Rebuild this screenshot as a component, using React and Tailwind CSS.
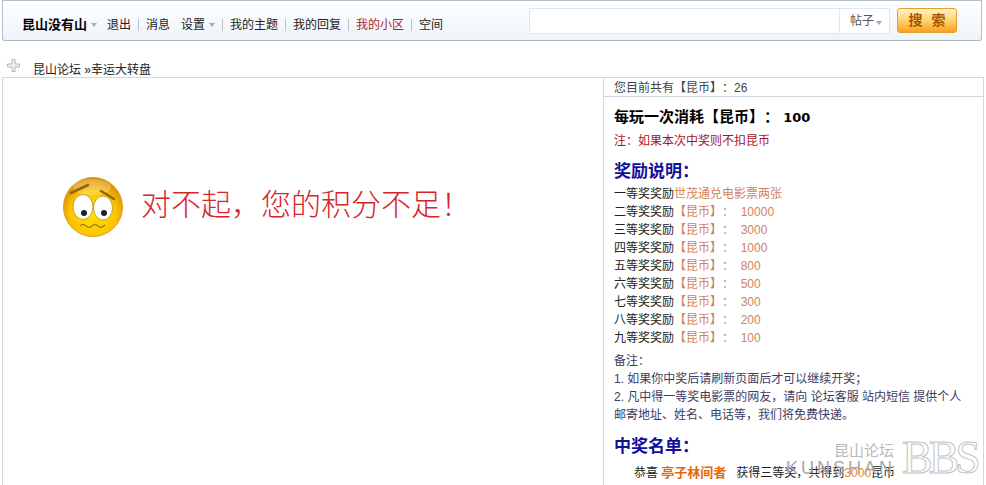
import React from 'react';

const cjk = "font-['Liberation_Sans','Noto_Sans_CJK_SC',sans-serif] [text-spacing-trim:space-all]";

const prizes = [
  ['二等奖奖励', '10000'],
  ['三等奖奖励', '3000'],
  ['四等奖奖励', '1000'],
  ['五等奖奖励', '800'],
  ['六等奖奖励', '500'],
  ['七等奖奖励', '300'],
  ['八等奖奖励', '200'],
  ['九等奖奖励', '100'],
];

function Caret() {
  return <span className="inline-block ml-[4px] w-0 h-0 border-x-[3px] border-x-transparent border-t-[4px] border-t-[#aaaaaa]" />;
}

function Sep() {
  return <span className="w-px h-[12px] bg-[#b9c3cc] mx-[7px]" />;
}

function Smiley() {
  return (
    <svg width="62" height="62" viewBox="0 0 62 62">
      <defs>
        <radialGradient id="face" cx="50%" cy="62%" r="60%">
          <stop offset="0%" stopColor="#ffe100" />
          <stop offset="65%" stopColor="#fcc400" />
          <stop offset="100%" stopColor="#d88a00" />
        </radialGradient>
      </defs>
      <circle cx="31" cy="31" r="29.500" fill="url(#face)" stroke="#dca11a" />
      <ellipse cx="30" cy="11" rx="19" ry="8" fill="#fff" opacity="0.25" />
      <path d="M9 17 L26 9" stroke="#8a6a10" strokeWidth="2.500" strokeLinecap="round" fill="none" />
      <path d="M39 15 L52 23" stroke="#8a6a10" strokeWidth="2.500" strokeLinecap="round" fill="none" />
      <ellipse cx="21" cy="31" rx="10" ry="12.500" fill="#fff" stroke="#c9a21f" />
      <ellipse cx="41" cy="32" rx="9.500" ry="12" fill="#fff" stroke="#c9a21f" />
      <circle cx="22" cy="37" r="3" fill="#222" />
      <circle cx="42" cy="37" r="3" fill="#222" />
      <path d="M18 50 q3 -3 6 0 t6 0 t6 0 t7 -1" stroke="#a9810f" strokeWidth="1.500" fill="none" />
    </svg>
  );
}

export default function App() {
  return (
    <div className={`${cjk} relative w-[986px] h-[485px] overflow-hidden bg-white text-[12px] text-[#222]`}>
      {/* top bar */}
      <div className="mx-[2px] w-[980px] h-[41px] flex items-center border border-t-[#b4c0c8] border-x-[#b4c0c8] border-b-[#aab6be] rounded-b-[3px] bg-gradient-to-b from-white to-[#eef4fa]">
        <div className="flex items-center pl-[19px] pt-[9px]">
          <b className="text-[13px] text-black">昆山没有山</b>
          <Caret />
          <span className="ml-[10px]">退出</span>
          <Sep />
          <span>消息</span>
          <span className="ml-[11px]">设置</span>
          <Caret />
          <Sep />
          <span>我的主题</span>
          <Sep />
          <span>我的回复</span>
          <Sep />
          <span className="text-[#b01c2e]">我的小区</span>
          <Sep />
          <span>空间</span>
        </div>
        <div className="ml-auto flex items-center pr-[24px]">
          <div className="w-[361px] h-[26px] flex bg-white border border-[#dfe6ec]">
            <div className="flex-1" />
            <div className="w-[50px] flex items-center pl-[10px] border-l border-[#dfe6ec] text-[#555]">
              帖子<span className="-ml-[2px]"><Caret /></span>
            </div>
          </div>
          <button className="ml-[7px] w-[60px] h-[25px] rounded-[3px] border border-[#e0a030] bg-gradient-to-b from-[#fff0c4] via-[#fdd36c] to-[#f8a010] text-[14px] font-bold text-[#a85400] tracking-[9px] pl-[9px]">
            搜索
          </button>
        </div>
      </div>

      {/* breadcrumb */}
      <div className="h-[36px] flex items-end pl-[7px] leading-[18px]">
        <svg width="13" height="13" viewBox="0 0 13 13" className="mb-[5px]">
          <path d="M5 .5h3v4.500h4.500v3H8v4.500H5V8H.5V5H5z" fill="#f0f0f0" stroke="#b5b5b5" />
        </svg>
        <span className="ml-[13px] relative top-[2px]">昆山论坛 »幸运大转盘</span>
      </div>

      {/* main table */}
      <div className="mx-[2px] w-[982px] flex border-t border-l border-r border-[#cfd8de] h-[408px]">
        <div className="w-[600px] shrink-0 flex items-start pl-[59px] pt-[98px]">
          <Smiley />
          <span className="ml-[17px] mt-[9px] text-[30px] leading-[40px] font-light text-[#d8252b]">对不起，您的积分不足！</span>
        </div>
        <div className="flex-1 border-l border-[#cfd8de]">
          <div className="h-[19px] pl-[10px] pt-[1px] leading-[19px] border-b border-[#cfd8de] text-[#444]">
            您目前共有【昆币】：26
          </div>
          <div className="pl-[10px] pt-[10px]">
            <div className="text-[15px] font-bold leading-[20px] text-black">
              每玩一次消耗【昆币】： <span className="text-[13px] font-['DejaVu_Sans',sans-serif]">100</span>
            </div>
            <div className="mt-[4px] leading-[18px] text-[#a8141e]">注：如果本次中奖则不扣昆币</div>
            <div className="mt-[10px] text-[17px] font-bold leading-[24px] text-[#10109a]">奖励说明：</div>
            <div className="mt-[1px] leading-[18px]">
              <div>一等奖奖励<span className="text-[#d2825a]">世茂通兑电影票两张</span></div>
              {prizes.map(([label, amount]) => (
                <div key={label}>
                  {label}<span className="text-[#d2825a]">【昆币】：&nbsp;&nbsp;{amount}</span>
                </div>
              ))}
            </div>
            <div className="mt-[5px] leading-[18px] text-[#3c3c64] w-[358px]">
              <div>备注：</div>
              <div>1. 如果你中奖后请刷新页面后才可以继续开奖；</div>
              <div>2. 凡中得一等奖电影票的网友，请向 论坛客服 站内短信 提供个人邮寄地址、姓名、电话等，我们将免费快递。</div>
            </div>
            <div className="mt-[11px] text-[17px] font-bold leading-[24px] text-[#10109a]">中奖名单：</div>
            <div className="mt-[5px] pl-[20px] leading-[18px]">
              恭喜 <b className="text-[13px] text-[#e06a10]">亭子林间者</b>&nbsp;&nbsp; 获得三等奖，共得到<span className="text-[#e08a20]">3000</span>昆币
            </div>
          </div>
        </div>
      </div>

      {/* watermark */}
      <div className="absolute left-[786px] top-[441px] w-[200px] h-[44px] pointer-events-none">
        <span className="absolute left-[48px] top-[1px] text-[15px] leading-[18px] text-[#b8b8b8]">昆山论坛</span>
        <span className="absolute left-0 top-[17px] text-[18px] leading-[20px] tracking-[3px] text-[#a8a8a8] font-light">KUNSHAN</span>
        <span className="absolute left-[116px] top-[-5px] text-[46px] leading-[44px] tracking-[-4px] font-['Liberation_Serif',serif] text-transparent [-webkit-text-stroke:1px_#c4c4c4]">BBS</span>
      </div>
    </div>
  );
}
